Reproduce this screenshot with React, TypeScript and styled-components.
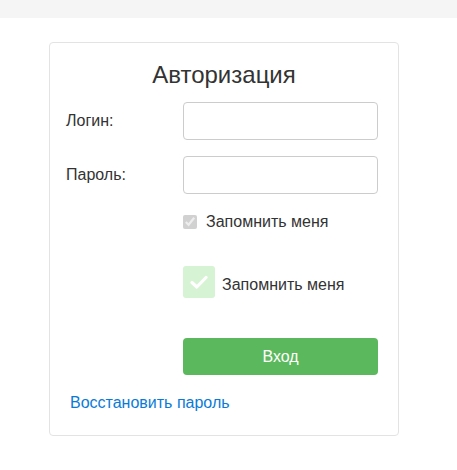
import React from "react";
import styled, { createGlobalStyle } from "styled-components";

const Global = createGlobalStyle`
  html, body { margin: 0; padding: 0; background: #fff; }
  body { font-family: "Liberation Sans", Arial, sans-serif; color: #333; }
  * { box-sizing: border-box; }
`;

const TopBar = styled.div`
  height: 18px;
  background: #f5f5f5;
`;

const Card = styled.div`
  margin: 24px 0 0 49px;
  width: 350px;
  border: 1px solid #e3e3e3;
  border-radius: 4px;
  padding: 17px 20px 21px 16px;
  display: flex;
  flex-direction: column;
`;

const Title = styled.h1`
  margin: 0 -20px 0 -16px;
  text-align: center;
  font-size: 24px;
  line-height: 29px;
  font-weight: 400;
  color: #333;
`;

const Row = styled.div<{ $mt: number }>`
  display: grid;
  grid-template-columns: 117px 1fr;
  align-items: center;
  margin-top: ${(p) => p.$mt}px;
`;

const Label = styled.label`
  font-size: 16px;
  line-height: 38px;
  color: #333;
`;

const Input = styled.input`
  height: 38px;
  width: 100%;
  border: 1px solid #ccc;
  border-radius: 4px;
  padding: 6px 12px;
  font-size: 16px;
  font-family: inherit;
  outline: none;
`;

const CheckLine = styled.label<{ $gap: number }>`
  grid-column: 2;
  display: flex;
  align-items: center;
  gap: ${(p) => p.$gap}px;
  font-size: 16px;
  line-height: 22px;
  color: #333;
`;

const NativeBox = styled.input`
  margin: 0;
  width: 14px;
  height: 14px;
`;

const BigBox = styled.span`
  width: 32px;
  height: 32px;
  border-radius: 3px;
  background: #d6f3d3;
  display: flex;
  align-items: center;
  justify-content: center;
  flex-shrink: 0;
`;

const BigText = styled.span`
  padding-top: 5px;
`;

const Button = styled.button`
  grid-column: 2;
  height: 37px;
  border: none;
  border-radius: 4px;
  background: #5cb85c;
  color: #fff;
  font-family: inherit;
  font-size: 16px;
  cursor: pointer;
`;

const Link = styled.a`
  margin-top: 17px;
  padding-left: 4px;
  font-size: 16px;
  line-height: 22px;
  color: #0a7ad8;
  text-decoration: none;
`;

export default function App() {
  return (
    <>
      <Global />
      <TopBar />
      <Card>
        <Title>Авторизация</Title>
        <Row $mt={13}>
          <Label>Логин:</Label>
          <Input type="text" />
        </Row>
        <Row $mt={16}>
          <Label>Пароль:</Label>
          <Input type="password" />
        </Row>
        <Row $mt={17}>
          <CheckLine $gap={9}>
            <NativeBox type="checkbox" checked disabled readOnly />
            Запомнить меня
          </CheckLine>
        </Row>
        <Row $mt={33}>
          <CheckLine $gap={7}>
            <BigBox>
              <svg width="18" height="14" viewBox="0 0 18 14">
                <path d="M2 7.5 L6.8 12 L16 2.5" fill="none" stroke="#fff" strokeWidth="3.2" strokeLinecap="round" strokeLinejoin="round" />
              </svg>
            </BigBox>
            <BigText>Запомнить меня</BigText>
          </CheckLine>
        </Row>
        <Row $mt={40}>
          <Button>Вход</Button>
        </Row>
        <Link href="#">Восстановить пароль</Link>
      </Card>
    </>
  );
}
